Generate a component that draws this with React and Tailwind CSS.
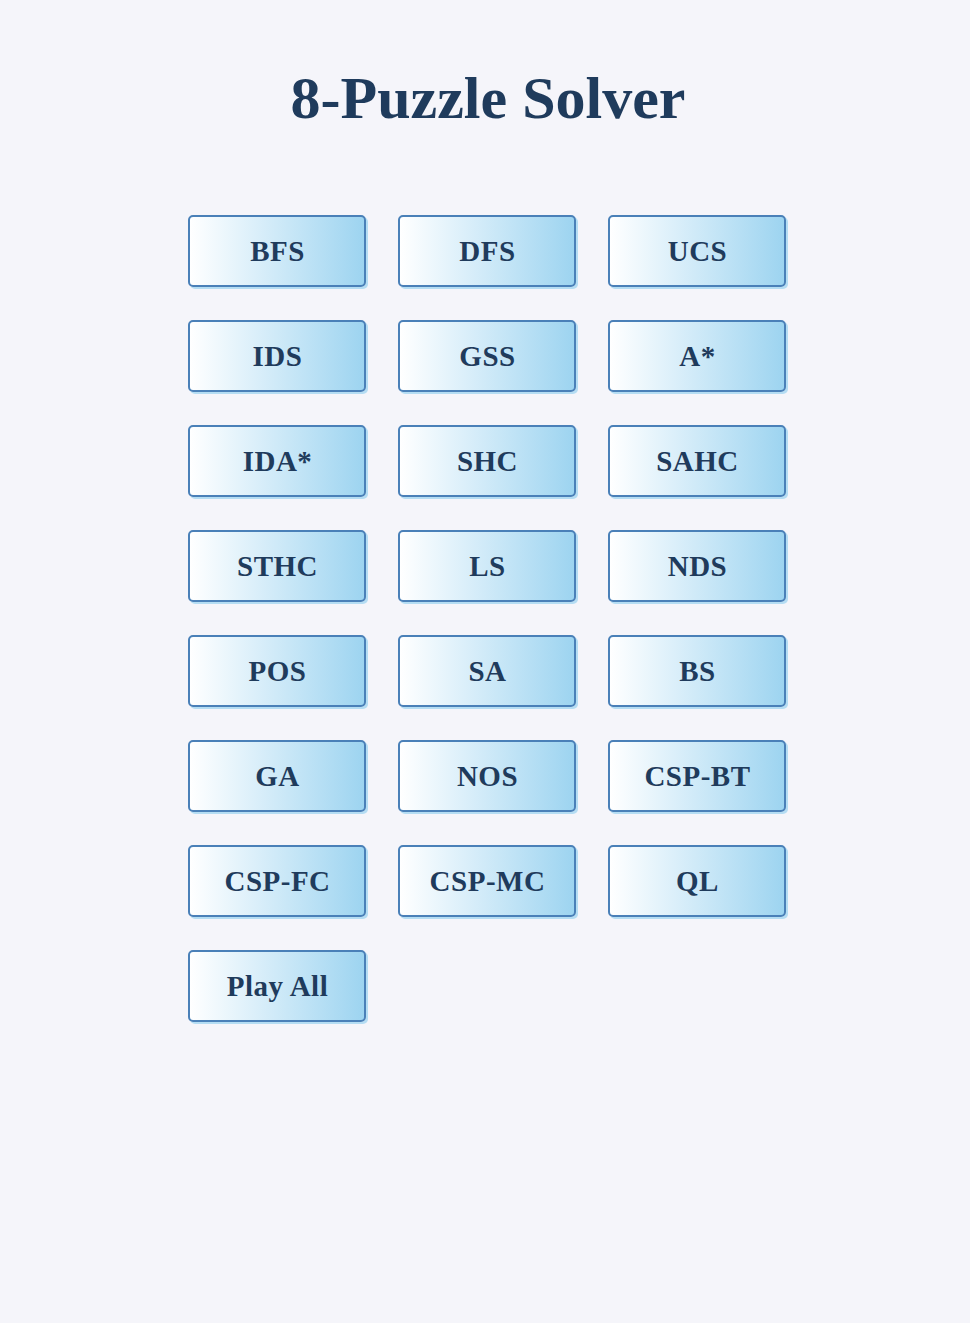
const algorithms = [
  'BFS', 'DFS', 'UCS',
  'IDS', 'GSS', 'A*',
  'IDA*', 'SHC', 'SAHC',
  'STHC', 'LS', 'NDS',
  'POS', 'SA', 'BS',
  'GA', 'NOS', 'CSP-BT',
  'CSP-FC', 'CSP-MC', 'QL',
  'Play All',
];

export default function App() {
  return (
    <div className="min-h-[1323px] bg-[#f5f5fa] pt-[68px] font-['Liberation_Serif',serif]">
      <h1 className="pl-[6px] text-center text-6xl font-bold text-[#1f3b5c]">8-Puzzle Solver</h1>

      <div className="mt-[87px] pl-[4px]">
        <div className="mx-auto grid w-[598px] grid-cols-[repeat(3,178px)] gap-x-[32px] gap-y-[33px]">
          {algorithms.map((name) => (
            <button
              key={name}
              className="flex h-[72px] w-[178px] items-center justify-center rounded-[5px] border-2 border-[#4a80b8] bg-gradient-to-r from-white to-[#9dd4f0] pt-[2px] pl-[1px] text-[29px] font-bold tracking-[0.5px] text-[#1f3b5c] shadow-[2px_2px_0_#b5ddf3]"
            >
              {name}
            </button>
          ))}
        </div>
      </div>
    </div>
  );
}
